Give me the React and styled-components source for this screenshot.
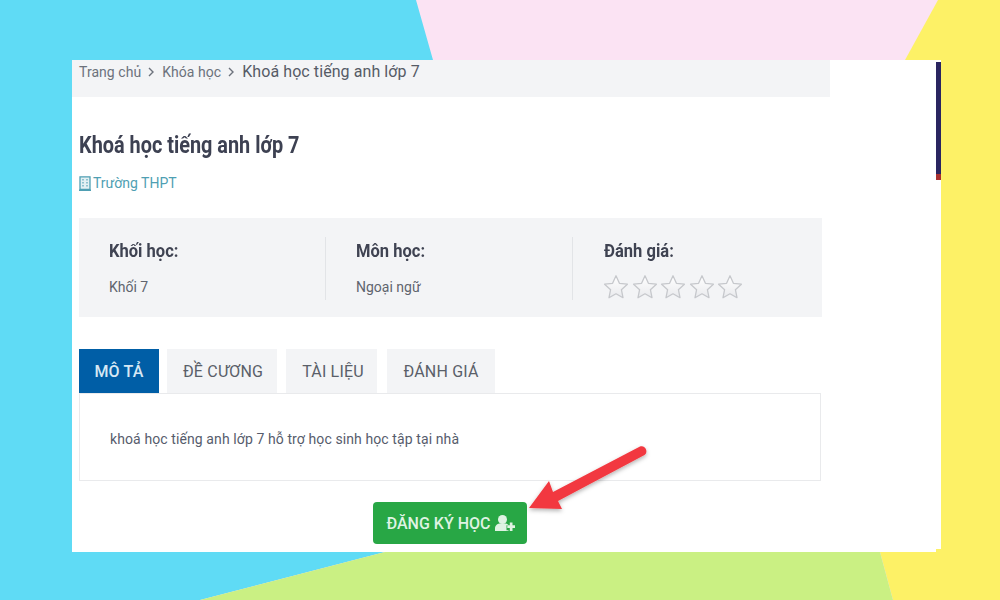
import React from 'react'
import styled, { createGlobalStyle } from 'styled-components'

const GlobalStyle = createGlobalStyle`
  html, body {
    margin: 0;
    padding: 0;
  }
  body {
    width: 1000px;
    height: 600px;
    overflow: hidden;
    font-family: Roboto, "Liberation Sans", sans-serif;
  }
`

const Page = styled.div`
  position: relative;
  width: 1000px;
  height: 600px;
  box-sizing: border-box;
  padding: 60px 59px 48px 72px;
  background: #fbe3f3;
  overflow: hidden;
`
const Paper = styled.div`
  position: absolute;
  inset: 0;
  background: ${props => props.color};
  clip-path: polygon(${props => props.points});
`
const Panel = styled.main`
  position: relative;
  width: 869px;
  height: 492px;
  background: #fff;
  clip-path: polygon(0 0, 100% 0, 100% 489px, 864px 489px, 864px 100%, 0 100%);
`
const SideBar = styled.div`
  position: absolute;
  top: 2px;
  right: 0;
  width: 5px;
  height: 118px;
  background: linear-gradient(#2a2560 95%, #a8302f 95%);
`
const Breadcrumb = styled.nav`
  width: 758px;
  height: 37px;
  box-sizing: border-box;
  padding: 2px 0 0 7px;
  display: flex;
  align-items: flex-start;
  background: #f3f4f6;
`
const Crumb = styled.span`
  font-size: ${props => (props.current ? '16px' : '14px')};
  line-height: 20px;
  letter-spacing: ${props => (props.current ? '0.08px' : '0.05px')};
  color: ${props => (props.current ? '#565b66' : '#6c727c')};
`
const Chevron = styled.svg`
  width: 8px;
  height: 10px;
  margin: 5px 7px 0 6px;
  fill: none;
  stroke: #6c727c;
  stroke-width: 1.4;
`
const Body = styled.div`
  width: 742px;
  margin-left: 7px;
`
const Title = styled.h1`
  margin: 34px 0 0;
  font-size: 24px;
  line-height: 28px;
  font-weight: 700;
  color: #3d4152;
  white-space: nowrap;
  transform: scaleX(0.828);
  transform-origin: left center;
`
const School = styled.a`
  display: flex;
  align-items: center;
  gap: 2px;
  margin-top: 14px;
  height: 20px;
  font-size: 14px;
  color: #4f9fb3;
`
const BuildingIcon = styled.svg`
  width: 12px;
  height: 15px;
`
const InfoBox = styled.section`
  display: grid;
  grid-template-columns: 246px 247px 1fr;
  box-sizing: border-box;
  height: 99px;
  width: 743px;
  margin-top: 25px;
  padding: 19px 0 17px;
  background: #f3f4f6;
`
const InfoCol = styled.div`
  padding-left: ${props => props.inset}px;
  border-left: ${props => (props.first ? 'none' : '1px solid #e2e4e7')};
`
const InfoLabel = styled.div`
  font-size: 19px;
  line-height: 28px;
  font-weight: 700;
  color: #3f4352;
  transform: scaleX(0.87);
  transform-origin: left center;
  white-space: nowrap;
`
const InfoValue = styled.div`
  margin-top: 12px;
  font-size: 14px;
  line-height: 20px;
  color: #5f646e;
`
const Stars = styled.div`
  display: flex;
  gap: 2.5px;
  margin-top: 9px;
  margin-left: -1px;
`
const TabRow = styled.div`
  display: flex;
  margin-top: 32px;
  height: 44px;
`
const Tab = styled.div`
  display: flex;
  align-items: center;
  justify-content: center;
  box-sizing: border-box;
  width: ${props => props.w}px;
  margin-right: ${props => props.gap}px;
  padding-left: ${props => props.shift || 0}px;
  font-size: 16px;
  letter-spacing: 0.2px;
  font-weight: ${props => (props.active ? 500 : 400)};
  color: ${props => (props.active ? '#d6e8f4' : '#5a5f69')};
  background: ${props => (props.active ? '#005ea6' : '#f3f4f6')};
  white-space: nowrap;
`
const TabBody = styled.div`
  box-sizing: border-box;
  height: 88px;
  padding: 35px 0 0 30px;
  border: 1px solid #e9eaec;
  font-size: 14px;
  letter-spacing: 0.1px;
  line-height: 20px;
  color: #565c6c;
`
const ButtonRow = styled.div`
  display: flex;
  justify-content: center;
  margin-top: 21px;
`
const Button = styled.button`
  display: flex;
  align-items: center;
  justify-content: center;
  gap: 4px;
  width: 154px;
  height: 42px;
  padding: 0 0 0 1px;
  border: none;
  border-radius: 4px;
  background: #28a745;
  color: #dff3e3;
  font-family: inherit;
  font-size: 16px;
  font-weight: 500;
  white-space: nowrap;
`
const UserPlusIcon = styled.svg`
  width: 20px;
  height: 16px;
  fill: #dff3e3;
`
const Arrow = styled.svg`
  position: absolute;
  left: 450px;
  top: 380px;
  width: 140px;
  height: 100px;
  overflow: visible;
`

const Star = () => (
  <svg width="26" height="26" viewBox="0 0 26 26">
    <defs>
      <linearGradient id="starFill" x1="0" y1="0" x2="0" y2="1">
        <stop offset="0" stopColor="#ffffff" />
        <stop offset="1" stopColor="#e9eaed" />
      </linearGradient>
    </defs>
    <path
      d="M13 1.800l3.400 7.500 8 .9-6 5.500 1.600 8L13 19.800l-7 3.900 1.600-8-6-5.500 8-.9z"
      fill="url(#starFill)"
      stroke="#c6c8cc"
      strokeWidth="1.3"
      strokeLinejoin="round"
    />
  </svg>
)

const Sep = () => (
  <Chevron viewBox="0 0 8 10">
    <path d="M2 1l4 4-4 4" />
  </Chevron>
)

export default function App() {
  return (
    <Page>
      <GlobalStyle />
      <Paper color="#fdf166" points="938px 0, 1000px 0, 1000px 600px, 893px 600px, 880px 552px, 905px 60px" />
      <Paper color="#5fdbf5" points="0 0, 416px 0, 433px 60px, 433px 552px, 385px 552px, 200px 600px, 0 600px" />
      <Paper color="#caf083" points="200px 600px, 385px 552px, 880px 552px, 893px 600px" />
      <Panel>
        <SideBar />
        <Breadcrumb>
          <Crumb>Trang chủ</Crumb>
          <Sep />
          <Crumb>Khóa học</Crumb>
          <Sep />
          <Crumb current>Khoá học tiếng anh lớp 7</Crumb>
        </Breadcrumb>
        <Body>
          <Title>Khoá học tiếng anh lớp 7</Title>
          <School>
            <BuildingIcon viewBox="0 0 12 15">
              <path d="M1 .8h10v12.700H1z" fill="#e3f0f3" stroke="#4f9fb3" strokeWidth="1.300" />
              <path d="M3 3h2v1.500H3zM7 3h2v1.500H7zM3 6h2v1.500H3zM7 6h2v1.500H7zM3 9h2v1.500H3zM7 9h2v1.500H7z" fill="#8fc2cf" />
              <path d="M0 13.500h12V15H0z" fill="#4f9fb3" />
            </BuildingIcon>
            Trường THPT
          </School>
          <InfoBox>
            <InfoCol first inset={30}>
              <InfoLabel>Khối học:</InfoLabel>
              <InfoValue>Khối 7</InfoValue>
            </InfoCol>
            <InfoCol inset={30}>
              <InfoLabel>Môn học:</InfoLabel>
              <InfoValue>Ngoại ngữ</InfoValue>
            </InfoCol>
            <InfoCol inset={31}>
              <InfoLabel>Đánh giá:</InfoLabel>
              <Stars>
                {[0, 1, 2, 3, 4].map(i => (
                  <Star key={i} />
                ))}
              </Stars>
            </InfoCol>
          </InfoBox>
          <TabRow>
            <Tab active w={80} gap={8}>MÔ TẢ</Tab>
            <Tab w={110} gap={9} shift={2}>ĐỀ CƯƠNG</Tab>
            <Tab w={91} gap={10} shift={3}>TÀI LIỆU</Tab>
            <Tab w={108} gap={0}>ĐÁNH GIÁ</Tab>
          </TabRow>
          <TabBody>khoá học tiếng anh lớp 7 hỗ trợ học sinh học tập tại nhà</TabBody>
          <ButtonRow>
            <Button>
              ĐĂNG KÝ HỌC
              <UserPlusIcon viewBox="0 0 20 16">
                <circle cx="7.500" cy="4.500" r="4.500" />
                <path d="M0 16v-2.500C0 10.800 2.200 8.500 5 8.500h5c1.500 0 2.800.6 3.700 1.700H11.500v5h2V16z" />
                <path d="M14.800 7.500h2.700v2.800H20V13h-2.500v3h-2.700v-3H12.300v-2.700h2.500z" />
              </UserPlusIcon>
            </Button>
          </ButtonRow>
        </Body>
        <Arrow viewBox="0 0 140 100">
          <defs>
            <filter id="arrowShadow" x="-20%" y="-20%" width="140%" height="150%">
              <feDropShadow dx="0" dy="2" stdDeviation="2" floodColor="#000" floodOpacity="0.3" />
            </filter>
          </defs>
          <g filter="url(#arrowShadow)" fill="#f2383f">
            <path d="M7 68L27 41L31 52L118 6.500C123 4.500 127 12 122.500 15L36 61L40 69Z" />
          </g>
        </Arrow>
      </Panel>
    </Page>
  )
}
